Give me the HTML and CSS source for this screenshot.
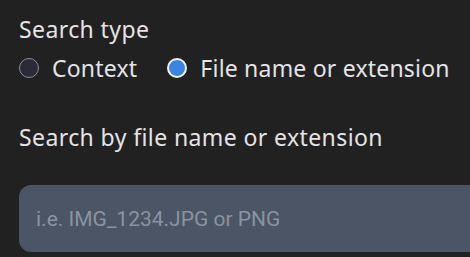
FILE: index.html
```html
<!DOCTYPE html>
<html lang="en">
<head>
  <meta charset="UTF-8" />
  <title>Search</title>
  <link rel="stylesheet" href="styles.css">
</head>
<body>

<div class="panel">
  <div class="field-label">Search type</div>
  <div class="radio-row">
    <label class="radio-option">
      <input type="radio" name="type" value="context" />
      <span class="radio-dot"></span>
      Context
    </label>
    <label class="radio-option">
      <input type="radio" name="type" value="file" checked />
      <span class="radio-dot"></span>
      File name or extension
    </label>
  </div>

  <div class="field-label by-label">Search by file name or extension</div>
  <input class="search-input" type="text" placeholder="i.e. IMG_1234.JPG or PNG" />
</div>

</body>
</html>
```

FILE: styles.css
```css
* { box-sizing: border-box; margin: 0; padding: 0; }

body {
  background: #212121;
  color: #e3e4e8;
  font-family: 'Noto Sans', sans-serif;
  overflow: hidden;
}

.panel {
  padding: 13px 0 0 19px;
  width: 470px;
}

.field-label {
  font-size: 23px;
  line-height: 32px;
  letter-spacing: 0.4px;
  white-space: nowrap;
}

.radio-row {
  display: flex;
  gap: 30px;
  margin-top: 7px;
  white-space: nowrap;
}

.radio-option {
  display: flex;
  align-items: center;
  gap: 13px;
  font-size: 23px;
  line-height: 32px;
  letter-spacing: 0.2px;
  cursor: pointer;
}

.radio-option input { display: none; }

.radio-dot {
  flex: none;
  width: 20px;
  height: 20px;
  border-radius: 50%;
  background: #2b2a39;
  border: 1px solid #8b8a98;
}

.radio-option input:checked + .radio-dot {
  background: #3a84e3;
  border: 2px solid #f2f4f8;
}

.by-label {
  margin-top: 37px;
}

.search-input {
  display: block;
  margin-top: 32px;
  width: 451px;
  height: 67px;
  border: none;
  border-radius: 12px 0 0 12px;
  background: #4b5565;
  padding: 0 17px;
  font-family: 'Roboto', sans-serif;
  font-size: 21px;
  color: #e3e4e8;
  outline: none;
}

.search-input::placeholder {
  color: #8a93a1;
}
```
